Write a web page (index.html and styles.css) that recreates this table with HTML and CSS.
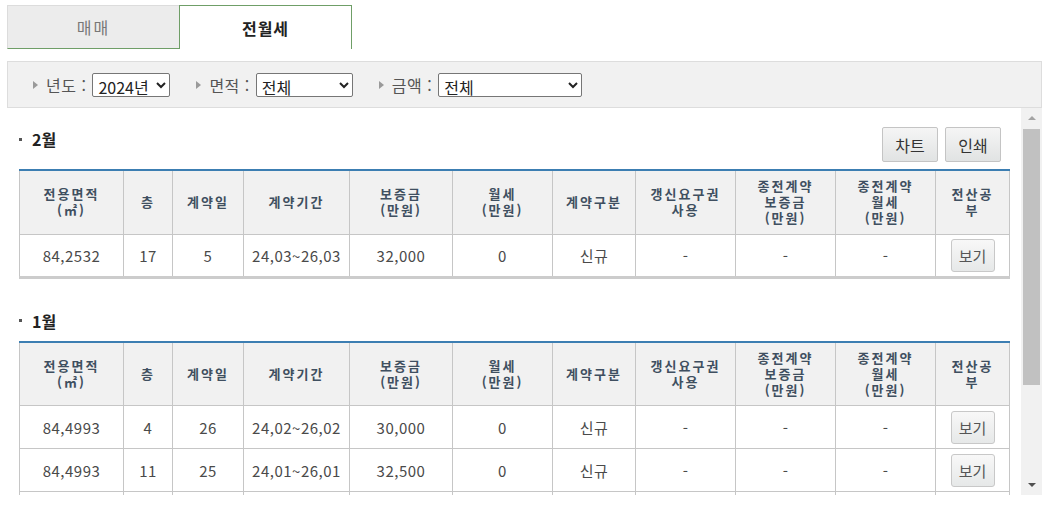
FILE: index.html
```html
<!DOCTYPE html>
<html lang="ko">
<head>
<meta charset="utf-8">
<title>실거래가 - 전월세</title>
<link rel="stylesheet" href="styles.css">
</head>
<body>
<div class="page">
  <div class="tabs">
    <div class="tab">매매</div>
    <div class="tab tab-active">전월세</div>
  </div>

  <div class="filter-bar">
    <div class="filter-item">
      <span class="tri"></span>
      <span class="filter-label">년도 :</span>
      <select class="sel sel-year"><option>2024년</option></select>
    </div>
    <div class="filter-item">
      <span class="tri"></span>
      <span class="filter-label">면적 :</span>
      <select class="sel sel-area"><option>전체</option></select>
    </div>
    <div class="filter-item">
      <span class="tri"></span>
      <span class="filter-label">금액 :</span>
      <select class="sel sel-price"><option>전체</option></select>
    </div>
  </div>

  <div class="scroll-box">
    <div class="scroll-content">
      <section class="month month-first">
        <div class="month-head">
          <h2 class="month-title"><span class="dot"></span>2월</h2>
          <div class="head-buttons">
            <button class="btn">차트</button>
            <button class="btn">인쇄</button>
          </div>
        </div>
        <table class="grid">
          <colgroup>
            <col class="c1"><col class="c2"><col class="c3"><col class="c4"><col class="c5"><col class="c6"><col class="c7"><col class="c8"><col class="c9"><col class="c10"><col class="c11">
          </colgroup>
          <thead>
            <tr>
              <th>전용면적<br>(㎡)</th><th>층</th><th>계약일</th><th>계약기간</th><th>보증금<br>(만원)</th><th>월세<br>(만원)</th><th>계약구분</th><th>갱신요구권<br>사용</th><th>종전계약<br>보증금<br>(만원)</th><th>종전계약<br>월세<br>(만원)</th><th>전산공<br>부</th>
            </tr>
          </thead>
          <tbody>
            <tr>
              <td>84,2532</td><td>17</td><td>5</td><td>24,03~26,03</td><td>32,000</td><td>0</td><td>신규</td><td>-</td><td>-</td><td>-</td><td><button class="btn-view">보기</button></td>
            </tr>
          </tbody>
        </table>
      </section>

      <section class="month month-second">
        <div class="month-head">
          <h2 class="month-title"><span class="dot"></span>1월</h2>
        </div>
        <table class="grid">
          <colgroup>
            <col class="c1"><col class="c2"><col class="c3"><col class="c4"><col class="c5"><col class="c6"><col class="c7"><col class="c8"><col class="c9"><col class="c10"><col class="c11">
          </colgroup>
          <thead>
            <tr>
              <th>전용면적<br>(㎡)</th><th>층</th><th>계약일</th><th>계약기간</th><th>보증금<br>(만원)</th><th>월세<br>(만원)</th><th>계약구분</th><th>갱신요구권<br>사용</th><th>종전계약<br>보증금<br>(만원)</th><th>종전계약<br>월세<br>(만원)</th><th>전산공<br>부</th>
            </tr>
          </thead>
          <tbody>
            <tr>
              <td>84,4993</td><td>4</td><td>26</td><td>24,02~26,02</td><td>30,000</td><td>0</td><td>신규</td><td>-</td><td>-</td><td>-</td><td><button class="btn-view">보기</button></td>
            </tr>
            <tr>
              <td>84,4993</td><td>11</td><td>25</td><td>24,01~26,01</td><td>32,500</td><td>0</td><td>신규</td><td>-</td><td>-</td><td>-</td><td><button class="btn-view">보기</button></td>
            </tr>
            <tr>
              <td></td><td></td><td></td><td></td><td></td><td></td><td></td><td></td><td></td><td></td><td></td>
            </tr>
          </tbody>
        </table>
      </section>
    </div>
    <div class="scrollbar">
      <div class="sb-btn"><span class="sb-up"></span></div>
      <div class="sb-track"><div class="sb-thumb"></div></div>
      <div class="sb-btn"><span class="sb-down"></span></div>
    </div>
  </div>
</div>
</body>
</html>
```

FILE: styles.css
```css
* { box-sizing: border-box; }

html, body {
  margin: 0;
  padding: 0;
  background: #ffffff;
  font-family: "Noto Sans CJK KR", "Noto Sans", sans-serif;
  color: #444;
}

.page {
  padding: 5px 8px 0 7px;
}

/* tabs */
.tabs {
  display: flex;
  height: 44px;
}

.tab {
  width: 172px;
  height: 44px;
  display: flex;
  align-items: center;
  justify-content: center;
  font-size: 16px;
  color: #777;
  letter-spacing: 2px;
  background: #ececec;
  border-top: 1px solid #dcdcdc;
  border-left: 1px solid #dcdcdc;
  border-bottom: 1px solid #6f9e67;
}

.tab-active {
  width: 173px;
  background: #fff;
  color: #222;
  font-weight: bold;
  letter-spacing: 1px;
  border: 1px solid #6f9e67;
  border-bottom: none;
}

/* filter bar */
.filter-bar {
  margin-top: 12px;
  height: 47px;
  width: 1035px;
  background: #f1f1f1;
  border: 1px solid #dddddd;
  display: flex;
  align-items: center;
  padding-left: 25px;
  gap: 26px;
}

.filter-item {
  display: flex;
  align-items: center;
}

.tri {
  width: 0;
  height: 0;
  border-top: 4px solid transparent;
  border-bottom: 4px solid transparent;
  border-left: 5px solid #9a9a9a;
  margin-right: 8px;
}

.filter-label {
  font-size: 16px;
  color: #555;
  margin-right: 6px;
  letter-spacing: 0.5px;
}

.sel {
  height: 24px;
  font-family: "Noto Sans CJK KR", "Noto Sans", sans-serif;
  font-size: 16px;
  color: #222;
  background: #fff;
  border: 1px solid #767676;
  border-radius: 2px;
  padding: 0 1px;
}

.sel-year { width: 78px; }
.sel-area { width: 97px; }
.sel-price { width: 144px; }

/* scroll box */
.scroll-box {
  display: flex;
  width: 1035px;
  height: 387px;
}

.scroll-content {
  flex: 1;
  overflow: hidden;
  padding-left: 12px;
}

.month {
  width: 990px;
}

.month-first {
  padding-top: 19px;
}

.month-second {
  margin-top: 30px;
}

.month-head {
  display: flex;
  justify-content: space-between;
  align-items: flex-start;
  padding-right: 8px;
  margin-bottom: 7px;
}

.month-second .month-head {
  margin-bottom: 10px;
}

.month-title {
  margin: 2px 0 0 0;
  font-size: 16px;
  line-height: 20px;
  font-weight: bold;
  color: #222;
  display: flex;
  align-items: center;
}

.dot {
  width: 3px;
  height: 3px;
  background: #555;
  margin-right: 10px;
}

.head-buttons {
  display: flex;
  gap: 7px;
}

.btn {
  width: 56px;
  height: 35px;
  font-family: "Noto Sans CJK KR", "Noto Sans", sans-serif;
  font-size: 16px;
  color: #333;
  background: linear-gradient(#f5f5f5, #e1e3e3);
  border: 1px solid #c4c4c4;
  border-radius: 2px;
  padding: 0;
}

/* table */
.grid {
  width: 990px;
  border-collapse: collapse;
  table-layout: fixed;
  border-top: 2px solid #3c7eb2;
  border-bottom: 3px solid #cccccc;
}

.c1 { width: 104px; }
.c2 { width: 49px; }
.c3 { width: 71px; }
.c4 { width: 106px; }
.c5 { width: 103px; }
.c6 { width: 100px; }
.c7 { width: 83px; }
.c8 { width: 100px; }
.c9 { width: 100px; }
.c10 { width: 100px; }
.c11 { width: 74px; }

.grid th {
  height: 64px;
  background: #f1f1f1;
  border: 1px solid #c6c6c6;
  border-top: none;
  font-size: 13px;
  line-height: 16px;
  font-weight: bold;
  color: #3f4f60;
  letter-spacing: 2px;
  padding: 0 2px;
  text-align: center;
  vertical-align: middle;
}

.grid td {
  height: 43px;
  border: 1px solid #c6c6c6;
  font-size: 15px;
  color: #4a4a4a;
  letter-spacing: 0.5px;
  text-align: center;
  vertical-align: middle;
  padding: 0;
  white-space: nowrap;
}

.btn-view {
  width: 44px;
  height: 33px;
  font-family: "Noto Sans CJK KR", "Noto Sans", sans-serif;
  font-size: 15px;
  color: #555;
  background: linear-gradient(#f8f8f8, #e6e8e8);
  border: 1px solid #c8c8c8;
  border-radius: 3px;
  padding: 0;
}

/* scrollbar */
.scrollbar {
  width: 21px;
  height: 387px;
  background: #f1f1f1;
  display: flex;
  flex-direction: column;
}

.sb-btn {
  height: 20px;
  display: flex;
  align-items: center;
  justify-content: center;
}

.sb-up {
  width: 0;
  height: 0;
  border-left: 4px solid transparent;
  border-right: 4px solid transparent;
  border-bottom: 4px solid #a3a3a3;
}

.sb-down {
  width: 0;
  height: 0;
  border-left: 4px solid transparent;
  border-right: 4px solid transparent;
  border-top: 4px solid #505050;
}

.sb-track {
  flex: 1;
  padding: 1px 2px;
}

.sb-thumb {
  height: 256px;
  background: #c1c1c1;
}
```
